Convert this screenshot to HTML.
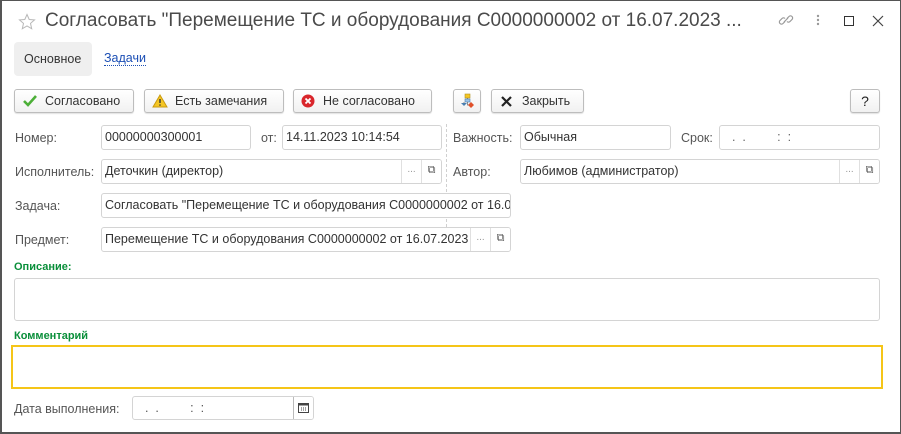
<!DOCTYPE html>
<html><head><meta charset="utf-8"><style>
*{box-sizing:border-box;margin:0;padding:0}
body{width:901px;height:434px;background:#fff;font-family:"Liberation Sans",Arial,sans-serif;font-size:12px;color:#404040;position:relative;overflow:hidden}
.frame{position:absolute;left:0;top:0;width:901px;height:434px;border:1px solid #555;border-left:2px solid #555;border-bottom:2px solid #555}
.a{position:absolute;white-space:nowrap}
.btn{position:absolute;height:24px;border:1px solid #bdbdbd;border-radius:3px;background:linear-gradient(#fff,#f1f1f1);box-shadow:0 1px 1px rgba(0,0,0,.12);font-size:12.5px;color:#333;line-height:22px}
.in{position:absolute;height:25px;border:1px solid #d4d4d4;border-radius:3px;background:#fff;font-size:12.5px;color:#333;line-height:23px;padding-left:3px;overflow:hidden;white-space:nowrap}
.lbl{position:absolute;font-size:12.5px;color:#555;line-height:14px}
.sb{position:absolute;top:0;height:23px;width:20px;border-left:1px solid #e0e0e0;background:#fff;text-align:center;color:#999;font-size:10px;line-height:20px}
.g{position:absolute;color:#0a8f3a;font-weight:bold;font-size:11px}
</style></head><body>
<div class="frame"></div>
<svg class="a" style="left:18px;top:13px" width="18" height="18" viewBox="0 0 18 18"><path d="M9 1.5l2.2 5 5.3.4-4 3.5 1.2 5.3L9 13l-4.7 2.7 1.2-5.3-4-3.5 5.3-.4z" fill="none" stroke="#b8b8b8" stroke-width="1"/></svg>
<div class="a" style="left:45px;top:10px;font-size:19px;color:#4a4a4a">Согласовать "Перемещение ТС и оборудования С0000000002 от 16.07.2023 ...</div>
<svg class="a" style="left:778px;top:12px" width="16" height="16" viewBox="0 0 16 16"><g fill="none" stroke="#999" stroke-width="1.2"><path d="M7 9.5l-2 2a2 2 0 01-3-3l2-2a2 2 0 013 0"/><path d="M9 6.5l2-2a2 2 0 013 3l-2 2a2 2 0 01-3 0"/><path d="M6 10l4-4"/></g></svg>
<svg class="a" style="left:815px;top:13px" width="6" height="14"><circle cx="3" cy="3" r="1.2" fill="#999"/><circle cx="3" cy="7" r="1.2" fill="#999"/><circle cx="3" cy="11" r="1.2" fill="#999"/></svg>
<div class="a" style="left:844px;top:16px;width:10px;height:10px;border:1.3px solid #333"></div>
<svg class="a" style="left:872px;top:15px" width="12" height="12"><path d="M1 1l10 10M11 1L1 11" stroke="#444" stroke-width="1.2"/></svg>
<div class="a" style="left:14px;top:42px;width:78px;height:34px;background:#efefef;border-radius:4px"></div>
<div class="a" style="left:24px;top:52px;font-size:12.5px;color:#333">Основное</div>
<div class="a" style="left:104px;top:52px;font-size:12.5px;color:#1c4fb5;border-bottom:1px dotted #1c4fb5;line-height:13px">Задачи</div>

<div class="btn" style="left:14px;top:89px;width:120px"><svg class="a" style="left:8px;top:5px" width="14" height="12"><path d="M1 6l4 4 8-9" fill="none" stroke="#4caf38" stroke-width="2.6"/></svg><span class="a" style="left:30px">Согласовано</span></div>
<div class="btn" style="left:144px;top:89px;width:140px"><svg class="a" style="left:7px;top:4px" width="16" height="14"><path d="M8 1L15 13H1z" fill="#f5c623" stroke="#c99a10" stroke-width="1"/><path d="M8 5v4" stroke="#333" stroke-width="1.4"/><circle cx="8" cy="11" r=".8" fill="#333"/></svg><span class="a" style="left:30px">Есть замечания</span></div>
<div class="btn" style="left:293px;top:89px;width:139px"><svg class="a" style="left:7px;top:4px" width="14" height="14"><circle cx="7" cy="7" r="6.5" fill="#d9262c"/><path d="M4.5 4.5l5 5M9.5 4.5l-5 5" stroke="#fff" stroke-width="1.8"/></svg><span class="a" style="left:29px">Не согласовано</span></div>
<div class="btn" style="left:453px;top:89px;width:28px"><svg class="a" style="left:6px;top:3px" width="16" height="16"><rect x="5" y="1" width="5" height="4" fill="#f5c623" stroke="#b09020" stroke-width=".6"/><rect x="5" y="6" width="5" height="3" fill="#9cc3e8" stroke="#4a7fb0" stroke-width=".6"/><path d="M1 10h6l-3 3z" fill="#4a7fb0"/><path d="M11 9l3 3-3 3-3-3z" fill="#e0502a"/><path d="M7.5 5v1M4 9v1M7.5 9v3h1" stroke="#666" stroke-width=".7" fill="none"/></svg></div>
<div class="btn" style="left:491px;top:89px;width:93px"><svg class="a" style="left:9px;top:6px" width="11" height="11"><path d="M1 1l9 9M10 1L1 10" stroke="#222" stroke-width="2.2"/></svg><span class="a" style="left:30px">Закрыть</span></div>
<div class="btn" style="left:850px;top:89px;width:30px;text-align:center;font-size:14px;color:#222">?</div>

<div class="lbl" style="left:15px;top:131px">Номер:</div>
<div class="in" style="left:101px;top:125px;width:150px">00000000300001</div>
<div class="lbl" style="left:261px;top:131px">от:</div>
<div class="in" style="left:282px;top:125px;width:160px">14.11.2023 10:14:54</div>
<div class="a" style="left:446px;top:124px;height:128px;border-left:1px dashed #d0d0d0"></div>
<div class="lbl" style="left:453px;top:131px">Важность:</div>
<div class="in" style="left:520px;top:125px;width:151px">Обычная</div>
<div class="lbl" style="left:681px;top:131px">Срок:</div>
<div class="in" style="left:719px;top:125px;width:161px;padding-left:12px;color:#666">.&nbsp;&nbsp;.&nbsp;&nbsp;&nbsp;&nbsp;&nbsp;&nbsp;&nbsp;&nbsp;&nbsp;:&nbsp;&nbsp;:</div>

<div class="lbl" style="left:15px;top:165px">Исполнитель:</div>
<div class="in" style="left:101px;top:159px;width:341px">Деточкин (директор)<div class="sb" style="right:20px">...</div><div class="sb" style="right:0;color:#555;font-size:11px">⧉</div></div>
<div class="lbl" style="left:453px;top:165px">Автор:</div>
<div class="in" style="left:520px;top:159px;width:360px">Любимов (администратор)<div class="sb" style="right:20px">...</div><div class="sb" style="right:0;color:#555;font-size:11px">⧉</div></div>

<div class="lbl" style="left:15px;top:199px">Задача:</div>
<div class="in" style="left:101px;top:193px;width:410px">Согласовать "Перемещение ТС и оборудования С0000000002 от 16.07.2023</div>
<div class="lbl" style="left:15px;top:233px">Предмет:</div>
<div class="in" style="left:101px;top:227px;width:410px">Перемещение ТС и оборудования С0000000002 от 16.07.2023<div class="sb" style="right:20px">...</div><div class="sb" style="right:0;color:#555;font-size:11px">⧉</div></div>

<div class="g" style="left:14px;top:261px">Описание:</div>
<div class="a" style="left:14px;top:278px;width:866px;height:43px;border:1px solid #d4d4d4;border-radius:3px"></div>
<div class="g" style="left:14px;top:330px">Комментарий</div>
<div class="a" style="left:11px;top:345px;width:872px;height:44px;border:2px solid #f5c518"></div>

<div class="lbl" style="left:14px;top:402px">Дата выполнения:</div>
<div class="in" style="left:132px;top:396px;width:182px;height:24px;padding-left:12px;color:#555">.&nbsp;&nbsp;.&nbsp;&nbsp;&nbsp;&nbsp;&nbsp;&nbsp;&nbsp;&nbsp;&nbsp;:&nbsp;&nbsp;:<div class="sb" style="right:0;height:22px;border-left:1px solid #bbb"><svg style="margin-top:5px" width="11" height="11"><rect x=".5" y="1.5" width="10" height="9" fill="none" stroke="#444"/><rect x=".5" y="1.5" width="10" height="2" fill="#444"/><path d="M3 6h1M5 6h1M7 6h1M3 8h1M5 8h1M7 8h1" stroke="#444"/></svg></div></div>
</body></html>
